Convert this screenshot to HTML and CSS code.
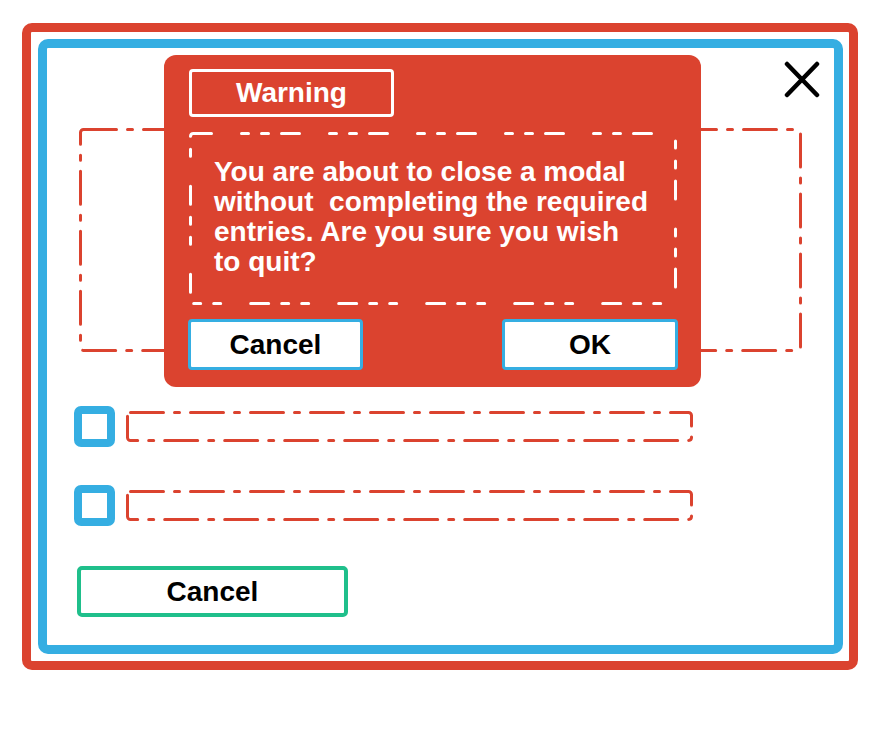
FILE: index.html
```html
<!DOCTYPE html>
<html lang="en">
  <head>
    <meta charset="UTF-8" />
    <meta name="viewport" content="width=device-width, initial-scale=1.0" />
    <title>Close Modal Warning</title>
    <link rel="stylesheet" href="styles.css">
  </head>
  <body>
    <div class="frame">
      <div class="panel">
        <div class="panel-top">
          <button class="close-btn" aria-label="Close">
            <svg width="36" height="37" viewBox="0 0 36 37">
              <path d="M3 3 L33 34 M33 3 L3 34" stroke="#000" stroke-width="4.5" stroke-linecap="round" fill="none" />
            </svg>
          </button>
        </div>

        <svg class="placeholder" width="723" height="224" viewBox="0 0 723 224">
          <rect x="1.5" y="1.5" width="720" height="221" rx="3" class="dash-red" />
        </svg>

        <div class="option">
          <span class="checkbox"></span>
          <svg class="field" width="567" height="31" viewBox="0 0 567 31">
            <rect x="1.5" y="1.5" width="564" height="28" rx="3" class="dash-red" />
          </svg>
        </div>
        <div class="option">
          <span class="checkbox"></span>
          <svg class="field" width="567" height="31" viewBox="0 0 567 31">
            <rect x="1.5" y="1.5" width="564" height="28" rx="3" class="dash-red" />
          </svg>
        </div>

        <button class="btn btn-green">Cancel</button>

        <!-- warning shown on top of the form -->
        <div class="modal">
          <div class="modal-title">Warning</div>
          <div class="modal-body">
            <svg class="modal-outline" width="488" height="173" viewBox="0 0 488 173">
              <rect x="1.5" y="1.5" width="485" height="170" rx="3" class="dash-white" />
            </svg>
            <p class="modal-text">You are about to close a modal<br>without&nbsp; completing the required<br>entries. Are you sure you wish<br>to quit?</p>
          </div>
          <div class="modal-actions">
            <button class="btn btn-blue">Cancel</button>
            <button class="btn btn-blue btn-ok">OK</button>
          </div>
        </div>
      </div>
    </div>
  </body>
</html>
```

FILE: styles.css
```css
body {
  margin: 0;
  background: #fff;
  font-family: "Liberation Sans", Arial, sans-serif;
}
.frame {
  box-sizing: border-box;
  width: 836px;
  height: 647px;
  margin: 23px 0 0 22px;
  padding: 7px 6px 7px 7px;
  border: 9px solid #db432f;
  border-radius: 10px;
}
.panel {
  position: relative;
  box-sizing: border-box;
  height: 100%;
  border: 9px solid #35aee2;
  border-radius: 10px;
  display: flex;
  flex-direction: column;
  align-items: flex-start;
}
.panel-top {
  align-self: stretch;
  display: flex;
  justify-content: flex-end;
  padding: 13px 14px 0 0;
}
.close-btn {
  display: block;
  padding: 0;
  border: none;
  background: none;
  width: 36px;
  height: 37px;
}
.close-btn svg {
  display: block;
}
.placeholder {
  display: block;
  margin: 30px 0 0 32px;
}
.dash-red {
  fill: none;
  stroke: #db432f;
  stroke-width: 3;
  stroke-linecap: round;
  stroke-dasharray: 33 11 5 11;
}
.dash-white {
  fill: none;
  stroke: #fff;
  stroke-width: 3;
  stroke-linecap: round;
  stroke-dasharray: 18 30 7 13 7 13;
}
.option {
  display: flex;
  align-items: center;
  gap: 11px;
  margin: 54px 0 0 27px;
}
.option + .option {
  margin-top: 38px;
}
.checkbox {
  box-sizing: border-box;
  width: 41px;
  height: 41px;
  border: 8px solid #35aee2;
  border-radius: 7px;
  background: #fff;
}
.field {
  display: block;
}
.btn {
  box-sizing: border-box;
  height: 51px;
  padding: 0;
  background: #fff;
  color: #000;
  font-family: "Liberation Sans", Arial, sans-serif;
  font-weight: bold;
  font-size: 28px;
  cursor: pointer;
}
.btn-green {
  width: 271px;
  margin: 40px 0 0 30px;
  border: 4px solid #1fbf8b;
  border-radius: 5px;
}
.btn-blue {
  width: 175px;
  border: 3px solid #35aee2;
  border-radius: 4px;
}
.btn-ok {
  width: 176px;
}
.modal {
  position: absolute;
  left: 117px;
  top: 7px;
  box-sizing: border-box;
  width: 537px;
  height: 332px;
  padding: 14px 24px 0 25px;
  background: #db432f;
  border-radius: 12px;
  color: #fff;
}
.modal-title {
  box-sizing: border-box;
  width: 205px;
  height: 48px;
  border: 3px solid #fff;
  border-radius: 4px;
  font-weight: bold;
  font-size: 28px;
  line-height: 42px;
  text-align: center;
}
.modal-body {
  display: grid;
  margin-top: 15px;
}
.modal-outline,
.modal-text {
  grid-area: 1 / 1;
}
.modal-outline {
  display: block;
}
.modal-text {
  margin: 0;
  padding: 25px 0 0 25px;
  font-weight: bold;
  font-size: 28px;
  line-height: 30px;
}
.modal-actions {
  display: flex;
  justify-content: space-between;
  margin: 14px 0 0 -1px;
  width: 490px;
}
```
